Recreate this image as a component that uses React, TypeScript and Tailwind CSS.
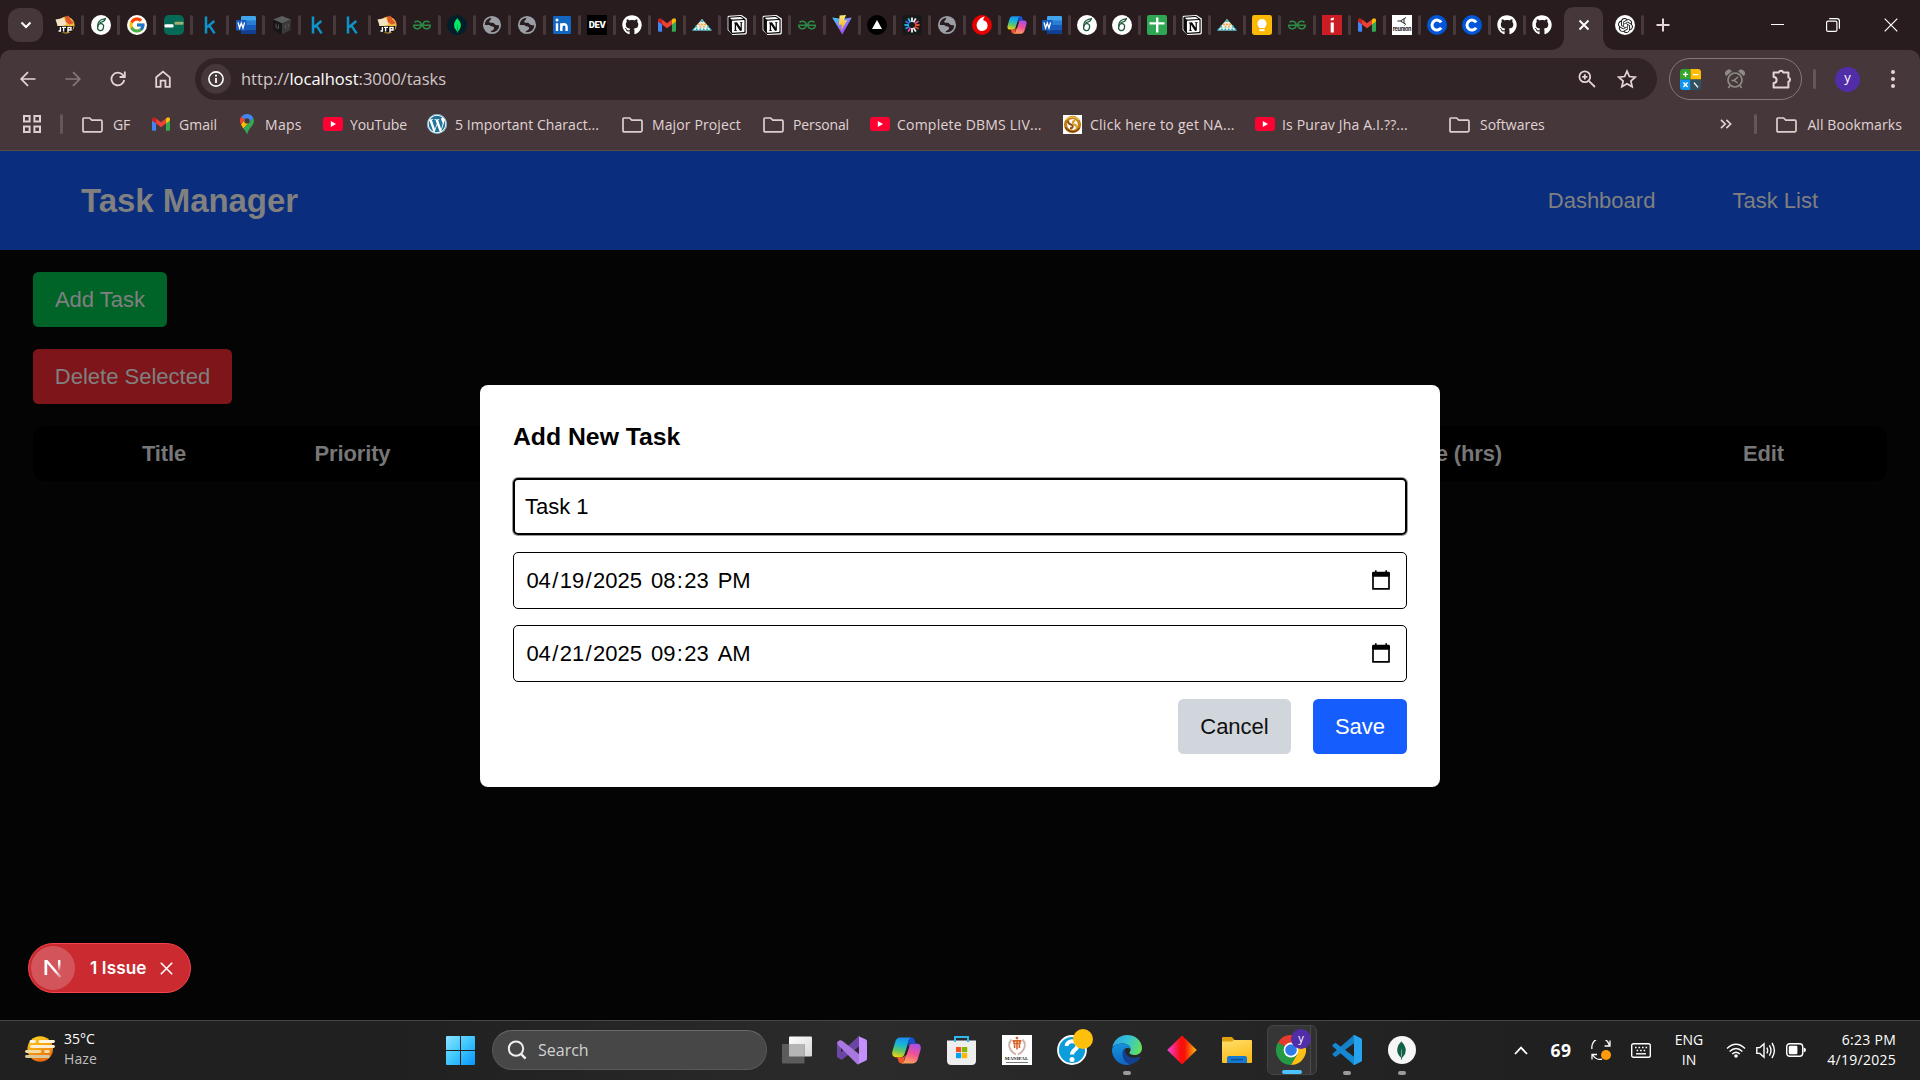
import type { ReactNode } from "react";
import { SiMongodb, SiNotion, SiGeeksforgeeks, SiOpenai } from "react-icons/si";
import { FaGithub, FaWordpress } from "react-icons/fa6";
import { FcGoogle } from "react-icons/fc";

/* ---------- favicons ---------- */

const Jtp = () => (
  <svg viewBox="0 0 20 20" className="size-5">
    <circle cx="11" cy="10" r="8.6" fill="#f0b93c" />
    <path d="M0.5 4.5 L9 3 L11.5 9.5 L3 12 Z" fill="#f3e3c4" />
    <path d="M10 2.5 L13.5 0.4 L15.5 4.5 L19 8 L14.5 9.5 L11 7 Z" fill="#e0562c" />
    <path d="M2 11 H18.5 L17 17.5 H4 Z" fill="#17120e" />
    <path d="M5.4 12 V16 H3.5 M8.6 12 V16.5 M7 12.4 H11 M13 17.4 V12.5 H16 V15 H13" stroke="#fff" strokeWidth="1.4" fill="none" />
  </svg>
);

const Six = () => (
  <svg viewBox="0 0 20 20" className="size-5">
    <circle cx="10" cy="10" r="10" fill="#fff" />
    <ellipse cx="9.6" cy="12.1" rx="2.9" ry="3.5" transform="rotate(14 9.6 12.1)" fill="none" stroke="#1d5c3a" strokeWidth="1.3" />
    <path d="M6.7 12.4 C6.4 8.6 8.2 5.4 11 4.5 L14.4 3.6 C14 5.9 12 7 8.6 7.6" fill="none" stroke="#1d5c3a" strokeWidth="1.3" />
  </svg>
);

const Keys = () => (
  <svg viewBox="0 0 20 20" className="size-5">
    <rect width="20" height="20" rx="5" fill="#046a56" />
    <rect x="0.5" y="9.2" width="9" height="3.4" rx="1" fill="#fff" />
    <rect x="10.5" y="6.8" width="9" height="3" rx="1" fill="#9fae72" />
  </svg>
);

const Kay = () => (
  <svg viewBox="0 0 20 20" className="size-5">
    <path d="M6 1.5 V18.5 M14.3 6 L7 12.3 M9.4 10.6 L14.6 18.4" stroke="#0d93c8" strokeWidth="2.5" fill="none" />
  </svg>
);

const Word = () => (
  <svg viewBox="0 0 20 20" className="size-5">
    <rect x="5" y="1" width="15" height="18" rx="1.2" fill="#41a5ee" />
    <path d="M5 5.5 H20 V10 H5 Z" fill="#2b7cd3" />
    <path d="M5 10 H20 V14.5 H5 Z" fill="#185abd" />
    <path d="M5 14.5 H20 V18 Q20 19 19 19 H6 Q5 19 5 18 Z" fill="#103f91" />
    <rect x="0" y="5" width="10.5" height="10.5" rx="1" fill="#185abd" />
    <path d="M2 7.4 L3.6 13 L5.3 8 L7 13 L8.6 7.4" stroke="#fff" strokeWidth="1.3" fill="none" />
  </svg>
);

const Cube = () => (
  <svg viewBox="0 0 20 20" className="size-5">
    <path d="M10 1 L19 4.5 L10 8.5 L1 4.5 Z" fill="#5d5d5d" />
    <path d="M1 4.5 L10 8.5 V19.5 L1.5 15 Z" fill="#161616" />
    <path d="M19 4.5 L10 8.5 V19.5 L18.5 15 Z" fill="#3a3a3a" />
    <path d="M4 8.5 V12.5 L6.5 13.6 V9.7 M13.5 10 V13.6 M16.3 8.8 V12" stroke="#555" fill="none" />
  </svg>
);

const Gfg = () => <SiGeeksforgeeks className="size-[18px] text-[#2c8a46]" />;

const Mongo = () => (
  <span className="flex size-5 items-center justify-center rounded-full bg-[#031e2b]">
    <SiMongodb className="size-[15px] text-[#00ed64]" />
  </span>
);

const Globe = () => (
  <svg viewBox="0 0 20 20" className="size-5">
    <circle cx="10" cy="10" r="8.2" fill="none" stroke="#9b9fa5" strokeWidth="1.7" />
    <path d="M2 9.2 C4.5 11 6.5 9.2 8 10.6 C9.5 12 12.6 11 12 13.6 C11.5 15.8 9 15 8.2 18.2 C5 17.6 2 14.5 2 9.2 Z" fill="#9b9fa5" />
    <path d="M10.5 2 C8.5 3 9.3 4.8 7.6 5.8 C6.2 7.6 9 8 10.4 7.7 C12 7.4 12.4 9.8 14 9.9 C15.6 10 17 10 18 10.4 C18 5.5 14.6 2.2 10.5 2 Z" fill="#9b9fa5" />
  </svg>
);

const LinkedIn = () => (
  <svg viewBox="0 0 18 18" className="size-[18px]">
    <rect width="18" height="18" rx="1.2" fill="#1166c2" />
    <path d="M4 7.2 V15 M8.3 15 V7.2 M8.3 11 C8.3 7.6 13.6 7 13.6 11 V15" stroke="#fff" strokeWidth="2.4" fill="none" />
    <circle cx="4" cy="4.1" r="1.5" fill="#fff" />
  </svg>
);

const Dev = () => (
  <span className="flex size-5 items-center justify-center bg-black font-['Roboto'] text-[9.5px] font-black tracking-[-0.4px] text-white">DEV</span>
);

const Github = () => <FaGithub className="size-5 text-white" />;

const Gmail = () => (
  <svg viewBox="0 0 24 18" className="h-[14px] w-[18px]">
    <path d="M0 3.2 V16.5 Q0 18 1.6 18 H5.4 V7.5 Z" fill="#4285f4" />
    <path d="M24 3.2 V16.5 Q24 18 22.4 18 H18.6 V7.5 Z" fill="#34a853" />
    <path d="M18.6 1.8 V8.2 L24 4.2 V2.6 C24 0 21.2 -0.8 19.4 0.9 Z" fill="#fbbc04" />
    <path d="M0 4.2 L5.4 8.2 V1.8 L4.6 0.9 C2.8 -0.8 0 0 0 2.6 Z" fill="#c5221f" />
    <path d="M5.4 1.8 L12 6.8 L18.6 1.8 V8.2 L12 13.2 L5.4 8.2 Z" fill="#ea4335" />
  </svg>
);

const Pyramid = () => (
  <svg viewBox="0 0 20 20" className="size-5">
    <path d="M10 4 L16 11 H4 Z" fill="#f4ead8" />
    <path d="M4.6 10.5 H15.4 L19.5 15.5 H0.5 Z" fill="#e4f3f2" />
    <path d="M10 4.5 L12 7 H8 Z M4 10 L5.6 12.4 H2.6 Z M1.4 13 L3 15.6 H0 Z M4.8 13 L6.4 15.6 H3.2 Z M8.3 13 L9.9 15.6 H6.7 Z M11.7 13 L13.3 15.6 H10.1 Z M15.2 13 L16.8 15.6 H13.6 Z M18.4 13 L20 15.6 H17 Z M16 10 L17.6 12.4 H14.6 Z" fill="#27b0bd" />
    <path d="M7 8 L8.4 10.3 H5.8 Z M10 8 L11.4 10.3 H8.6 Z M13 8 L14.4 10.3 H11.6 Z M8.5 10.6 L9.9 12.6 H7.1 Z M12 10.6 L13.4 12.6 H10.6 Z" fill="#f2a13a" />
  </svg>
);

const Notion = () => (
  <span className="relative flex size-5 items-center justify-center">
    <svg viewBox="0 0 20 20" className="absolute size-5">
      <path d="M0.6 2 Q0.6 0.8 2 0.7 L14.5 0 L19.8 3.6 V18 Q19.6 19.3 18.4 19.4 L5.5 20 L0.6 15 Z" fill="#fff" />
    </svg>
    <SiNotion className="relative size-[18px] text-[#0b0909]" />
  </span>
);

const Vite = () => (
  <svg viewBox="0 0 20 20" className="size-5">
    <defs>
      <linearGradient id="viteA" x1="0" y1="0" x2="0.7" y2="1">
        <stop offset="0" stopColor="#41d1ff" />
        <stop offset="1" stopColor="#bd34fe" />
      </linearGradient>
      <linearGradient id="viteB" x1="0" y1="0" x2="0" y2="1">
        <stop offset="0" stopColor="#ffea83" />
        <stop offset="1" stopColor="#ffa800" />
      </linearGradient>
    </defs>
    <path d="M0.2 2.4 L10 4 L19.8 2.4 L10.3 19.6 Z" fill="url(#viteA)" />
    <path d="M7.6 0.6 L14 0 L11.8 5.5 L15.2 5 L9.2 15.5 L9.8 9.4 L6.8 10 Z" fill="url(#viteB)" />
  </svg>
);

const Vercel = () => (
  <svg viewBox="0 0 20 20" className="size-5">
    <circle cx="10" cy="10" r="10" fill="#000" />
    <path d="M10 5 L15 14 H5 Z" fill="#fff" />
  </svg>
);

const BURST: [number, string][] = [
  [0, "#f4f4f4"], [30, "#f4f4f4"], [60, "#f04c8c"], [90, "#f0542f"], [120, "#e8432e"], [150, "#f4f4f4"],
  [180, "#f4f4f4"], [210, "#ee4fa0"], [240, "#2b8ff5"], [270, "#21c0e8"], [300, "#3a6af0"], [330, "#35c1f1"],
];
const Burst = () => (
  <svg viewBox="0 0 20 20" className="size-5">
    <rect width="20" height="20" rx="4" fill="#171a1b" />
    {BURST.map(([a, c]) => (
      <path key={a} d="M10 2.4 V7" stroke={c} strokeWidth="1.8" transform={`rotate(${a} 10 10)`} />
    ))}
  </svg>
);

const Vodafone = () => (
  <svg viewBox="0 0 20 20" className="size-5">
    <circle cx="10" cy="10" r="10" fill="#e60000" />
    <path d="M13 1.6 C9 2 4.6 6 4.6 10.6 A5.5 5.5 0 0 0 15.6 10.4 C15.6 7.6 13.8 5.8 11.3 5.2 C11.2 3.8 12 2.4 13 1.6 Z" fill="#fff" />
  </svg>
);

const Copilot = ({ size }: { size: "sm" | "lg" }) => (
  <svg viewBox="0 0 28 26" className={size === "sm" ? "h-[18px] w-5" : "h-[27px] w-[29px]"}>
    <defs>
      <linearGradient id="cpA" x1="0.5" y1="0" x2="0.3" y2="1">
        <stop offset="0" stopColor="#1a8ff0" />
        <stop offset="0.35" stopColor="#18b5d8" />
        <stop offset="0.65" stopColor="#5cc46a" />
        <stop offset="1" stopColor="#f2d40b" />
      </linearGradient>
      <linearGradient id="cpB" x1="0.7" y1="0" x2="0.4" y2="1">
        <stop offset="0" stopColor="#a550ef" />
        <stop offset="0.5" stopColor="#ef5096" />
        <stop offset="1" stopColor="#ffa15c" />
      </linearGradient>
    </defs>
    <path d="M17 0.5 H19 C21 0.5 21.6 2 22.2 4 L23 6.5 H19 C17 6.5 16 7 15.2 9 Z" fill="#1450d8" />
    <path d="M11 25.5 H9 C7 25.5 6.4 24 5.8 22 L5 19.5 H9 C11 19.5 12 19 12.8 17 Z" fill="#f2542d" />
    <path d="M8 0.5 H18.5 C17 1 16.4 2.2 15.8 4.2 L12.4 15.6 C11.6 18.3 10.6 19.5 8 19.5 H3.4 C0.4 19.5 -0.3 16.5 0.5 13.6 L3 5 C3.9 2 5.4 0.5 8 0.5 Z" fill="url(#cpA)" />
    <path d="M20 25.5 H9.5 C11 25 11.6 23.8 12.2 21.8 L15.6 10.4 C16.4 7.7 17.4 6.5 20 6.5 H24.6 C27.6 6.5 28.3 9.5 27.5 12.4 L25 21 C24.1 24 22.6 25.5 20 25.5 Z" fill="url(#cpB)" />
    <path d="M15.6 8.6 H17 L14 17.6 H12 Z" fill="#2b1f22" />
  </svg>
);

const GreenPlus = () => (
  <svg viewBox="0 0 20 20" className="size-5">
    <rect width="20" height="20" rx="2" fill="#2fa653" />
    <path d="M10.2 2.5 V17.5 M2.5 8.4 H17.5" stroke="#fff" strokeWidth="2.4" />
  </svg>
);

const Keep = () => (
  <svg viewBox="0 0 20 20" className="size-5">
    <rect width="20" height="20" rx="2.4" fill="#fbb905" />
    <path d="M10 4 A4.6 4.6 0 0 0 7 12 V13 H13 V12 A4.6 4.6 0 0 0 10 4 Z" fill="#fff" />
    <rect x="7.4" y="14.2" width="5.2" height="1.9" fill="#fff" />
  </svg>
);

const RedI = () => (
  <svg viewBox="0 0 20 20" className="size-5">
    <rect width="20" height="20" fill="#cc1c24" />
    <path d="M8.7 3.6 L11.8 2.6 V5 L8.7 5.6 Z M8.7 7.4 H11.8 V17.4 H8.7 Z" fill="#fff" />
  </svg>
);

const Reunion = () => (
  <span className="flex size-5 flex-col items-center justify-between bg-white pt-[2px] pb-[3px]">
    <svg viewBox="0 0 10 8" className="h-2 w-[10px]">
      <path d="M9 0.5 L3.5 4 L9 7.5 M0.5 4 H3.5 M7 2 V6" stroke="#222" fill="none" />
    </svg>
    <span className="font-['Inter'] text-[5.5px] leading-[6px] font-bold tracking-[-0.3px] text-[#222]">reunion</span>
  </span>
);

const Cee = () => (
  <svg viewBox="0 0 20 20" className="size-5">
    <circle cx="10" cy="10" r="10" fill="#0156d8" />
    <path d="M14.2 7.4 A5 5 0 1 0 14.2 12.8" stroke="#fff" strokeWidth="3" fill="none" />
  </svg>
);

const ChatGpt = () => (
  <span className="flex size-5 items-center justify-center rounded-full bg-white">
    <SiOpenai className="size-[15px] text-[#1a1a1a]" />
  </span>
);

type TabDef = [() => ReactNode, string];
const W36 = "w-[36px]";
const W35 = "w-[35px]";
const CopilotTab = () => <Copilot size="sm" />;
const GoogleTab = () => (
  <span className="flex size-5 items-center justify-center rounded-full bg-white">
    <FcGoogle className="size-[18px]" />
  </span>
);
const TABS: TabDef[] = [
  [Jtp, W35], [Six, W36], [GoogleTab, W36], [Keys, "w-[37px]"], [Kay, W36], [Word, W36], [Cube, W36],
  [Kay, W35], [Kay, W35], [Jtp, W35], [Gfg, W35], [Mongo, W35], [Globe, W35], [Globe, W35], [LinkedIn, W35],
  [Dev, W35], [Github, W35], [Gmail, W35], [Pyramid, W35], [Notion, W35], [Notion, W35], [Gfg, W35],
  [Vite, W35], [Vercel, W35], [Burst, W35], [Globe, W35], [Vodafone, W35], [CopilotTab, W35], [Word, W35],
  [Six, W35], [Six, W35], [GreenPlus, W35], [Notion, W35], [Pyramid, W35], [Keep, W35], [Gfg, W35],
  [RedI, W35], [Gmail, W35], [Reunion, W35], [Cee, W35], [Cee, W35], [Github, W35], [Github, W35],
];

function Tab({ icon, width, sep }: { icon: ReactNode; width: string; sep: boolean }) {
  return (
    <div className={`flex shrink-0 items-center justify-end gap-1.5 ${width}`}>
      <div className="flex size-5 items-center justify-center">{icon}</div>
      <div className={sep ? "h-5 w-[3px] rounded-full bg-[#483a3c]" : "h-5 w-[3px]"} />
    </div>
  );
}

function TabStrip() {
  return (
    <div className="flex h-[50px] items-center bg-[#281c1e]">
      <div className="ml-2 flex h-[34px] w-[35px] shrink-0 items-center justify-center rounded-xl bg-[#46383a]">
        <svg viewBox="0 0 12 8" className="h-2 w-3">
          <path d="M1.5 1.5 L6 6 L10.5 1.5" stroke="#fff" strokeWidth="2" fill="none" />
        </svg>
      </div>
      <div className="ml-1.5 flex">
        {TABS.map(([Icon, width], i) => (
          <Tab key={i} icon={<Icon />} width={width} sep={i < TABS.length - 1} />
        ))}
      </div>
      <div className="relative ml-[3px] flex h-[50px] w-[39px] shrink-0 items-center justify-center">
        <svg viewBox="0 0 67 43" className="absolute bottom-0 -left-[14px] h-[43px] w-[67px]">
          <path d="M0 43 C9 43 14 38 14 29 V11 Q14 0 25 0 H42 Q53 0 53 11 V29 C53 38 58 43 67 43 Z" fill="#46383a" />
        </svg>
        <svg viewBox="0 0 12 12" className="relative size-3">
          <path d="M1.5 1.5 L10.5 10.5 M10.5 1.5 L1.5 10.5" stroke="#fff" strokeWidth="1.9" />
        </svg>
      </div>
      <div className="ml-[6px] flex">
        <Tab icon={<ChatGpt />} width={W35} sep />
      </div>
      <svg viewBox="0 0 14 14" className="ml-3 size-[14px]">
        <path d="M7 0.5 V13.5 M0.5 7 H13.5" stroke="#e6d6d8" strokeWidth="2" />
      </svg>
      <div className="ml-auto flex items-center pr-[22px] text-white">
        <svg viewBox="0 0 13 13" className="size-[13px]">
          <path d="M0 5.5 H13" stroke="currentColor" />
        </svg>
        <svg viewBox="0 0 14 14" className="ml-[42px] size-[14px]">
          <rect x="0.6" y="3.1" width="10.3" height="10.3" rx="1.5" fill="none" stroke="currentColor" strokeWidth="1.2" />
          <path d="M3.2 0.6 H11 Q13.4 0.6 13.4 3 V10.8" stroke="currentColor" strokeWidth="1.2" fill="none" />
        </svg>
        <svg viewBox="0 0 14 14" className="ml-11 size-[14px]">
          <path d="M0.7 0.7 L13.3 13.3 M13.3 0.7 L0.7 13.3" stroke="currentColor" strokeWidth="1.2" />
        </svg>
      </div>
    </div>
  );
}

/* ---------- toolbar ---------- */

function Toolbar() {
  return (
    <div className="flex h-[58px] items-center pl-[5px] text-[#e6d3d5]">
      <div className="flex w-[45px] justify-center">
        <svg viewBox="0 0 16 16" className="size-4">
          <path d="M15.5 8 H1.5 M8 1.2 L1.2 8 L8 14.8" stroke="currentColor" strokeWidth="1.7" fill="none" />
        </svg>
      </div>
      <div className="flex w-[45px] justify-center text-[#877779]">
        <svg viewBox="0 0 16 16" className="size-4">
          <path d="M0.5 8 H14.5 M8 1.2 L14.8 8 L8 14.8" stroke="currentColor" strokeWidth="1.7" fill="none" />
        </svg>
      </div>
      <div className="flex w-[45px] justify-center">
        <svg viewBox="0 0 16 16" className="size-4">
          <path d="M14.2 9 A6.4 6.4 0 1 1 12.8 3.9 L14.6 5.6" stroke="currentColor" strokeWidth="1.8" fill="none" />
          <path d="M14.8 0.6 V6 H9.6" stroke="currentColor" strokeWidth="1.8" fill="none" />
        </svg>
      </div>
      <div className="flex w-[45px] justify-center">
        <svg viewBox="0 0 16 18" className="h-[18px] w-4">
          <path d="M1.2 7.3 L8 1.6 L14.8 7.3 V16.8 H10.4 V10.6 H5.6 V16.8 H1.2 Z" stroke="currentColor" strokeWidth="1.8" fill="none" />
        </svg>
      </div>
      <div className="ml-[10px] flex h-[42px] w-[1462px] items-center rounded-full bg-[#302426] pr-[19px] pl-1.5">
        <div className="flex size-[30px] items-center justify-center rounded-full bg-[#46383a]">
          <svg viewBox="0 0 16 16" className="size-4">
            <circle cx="8" cy="8" r="7.1" stroke="#fff" strokeWidth="1.6" fill="none" />
            <path d="M8 7 V12" stroke="#fff" strokeWidth="1.8" />
            <circle cx="8" cy="4.7" r="1.1" fill="#fff" />
          </svg>
        </div>
        <span className="ml-[10px] text-[16.5px] whitespace-nowrap text-[#d2c7c8]">
          http://<span className="text-white">localhost</span>:3000/tasks
        </span>
        <svg viewBox="0 0 18 18" className="ml-auto size-[18px]">
          <circle cx="6.8" cy="6.8" r="5.4" stroke="currentColor" strokeWidth="1.8" fill="none" />
          <path d="M10.8 10.8 L17 17 M6.8 4.2 V9.4 M4.2 6.8 H9.4" stroke="currentColor" strokeWidth="1.8" />
        </svg>
        <svg viewBox="0 0 24 24" className="ml-[20px] size-[22px]">
          <path d="M12 3.4 L14.6 9.3 L21 9.9 L16.2 14.2 L17.6 20.5 L12 17.2 L6.4 20.5 L7.8 14.2 L3 9.9 L9.4 9.3 Z" stroke="currentColor" strokeWidth="1.9" fill="none" />
        </svg>
      </div>
      <div className="ml-3 flex h-[42px] w-[133px] items-center rounded-full border border-[#85787a] pl-[10px]">
        <svg viewBox="0 0 21 21" className="size-[21px]">
          <path d="M3 0 H10.5 V10.5 H0 V3 Q0 0 3 0 Z" fill="#34a52c" />
          <path d="M10.5 0 H18 Q21 0 21 3 V10.5 H10.5 Z" fill="#fdbc08" />
          <path d="M0 10.5 H10.5 V21 H3 Q0 21 0 18 Z" fill="#1294f2" />
          <path d="M10.5 10.5 H21 V18 Q21 21 18 21 H10.5 Z" fill="#32505f" />
          <path d="M5.5 2.8 V8 M2.9 5.4 H8.1 M13 5.6 H18.4 M3.4 13.6 L7.6 18 M7.6 13.6 L3.4 18 M14 13.6 L18 18.4" stroke="#fff" strokeWidth="1.4" />
        </svg>
        <svg viewBox="0 0 20 20" className="ml-6 size-5 text-[#8e8b87]">
          <circle cx="10" cy="11" r="7" stroke="currentColor" strokeWidth="1.7" fill="none" />
          <path d="M1.2 6.6 A3.2 3.2 0 0 1 6.4 2.2 Z M18.8 6.6 A3.2 3.2 0 0 0 13.6 2.2 Z" fill="currentColor" stroke="currentColor" strokeWidth="1" />
          <path d="M13 8 L9 11.4 H6.4 M9 11.4 L12.6 14 M5 16.5 L3.4 19 M15 16.5 L16.6 19" stroke="currentColor" strokeWidth="1.5" fill="none" />
        </svg>
        <svg viewBox="0 0 22 22" className="ml-[26px] size-[22px]">
          <path d="M2.6 4.4 H7.8 A2.3 2.3 0 0 1 12.2 4.4 H17.4 V9.4 A2.3 2.3 0 0 1 17.4 13.8 V19.6 H2.6 V15 A2.8 2.8 0 0 0 2.6 9 Z" stroke="currentColor" strokeWidth="2" strokeLinejoin="round" fill="none" />
          <path d="M8 4 A2.2 2.2 0 0 1 12 4 Z M18 9.4 A2.2 2.2 0 0 1 18 13.6 Z" fill="currentColor" />
        </svg>
      </div>
      <div className="ml-[11px] h-5 w-[3px] rounded-full bg-[#63575a]" />
      <div className="ml-[19px] flex size-[25px] items-center justify-center rounded-full bg-[#512da8] pb-[3px] text-[13px] text-white">y</div>
      <div className="ml-[31px] flex flex-col gap-[3px]">
        <i className="size-1 rounded-full bg-[#e6d3d5]" />
        <i className="size-1 rounded-full bg-[#e6d3d5]" />
        <i className="size-1 rounded-full bg-[#e6d3d5]" />
      </div>
    </div>
  );
}

/* ---------- bookmarks bar ---------- */

const Folder = () => (
  <svg viewBox="0 0 21 16" className="mt-px h-4 w-[21px]">
    <path d="M1 13.6 V2 Q1 1 2 1 H7.6 L9.8 3.2 H18.8 Q20 3.2 20 4.4 V13.6 Q20 14.9 18.8 14.9 H2.2 Q1 14.9 1 13.6 Z" stroke="#dccfd0" strokeWidth="1.7" fill="none" />
  </svg>
);

const YouTube = () => (
  <svg viewBox="0 0 20 14" className="h-[14px] w-5">
    <rect width="20" height="14" rx="3" fill="#ff0033" />
    <path d="M7.8 4 L13 7 L7.8 10 Z" fill="#fff" />
  </svg>
);

const MapsPin = () => (
  <svg viewBox="0 0 16 20" className="h-5 w-4">
    <path d="M8 0 C10.8 0 13.2 1.6 14.3 4 L8 11 L2.4 2.6 C3.8 1 5.8 0 8 0 Z" fill="#4285f4" />
    <path d="M2.4 2.6 L6 5.6 L2 10.4 C0.4 7.8 0.4 4.8 2.4 2.6 Z" fill="#ea4335" />
    <path d="M10 8.4 L4.4 14.6 C3.4 12.8 2.6 11.6 2 10.4 L6 5.6 Z" fill="#fbbc04" />
    <path d="M14.3 4 C15.4 6.4 15 8.8 13.6 11 C11.6 13.8 9.4 15.6 8.4 19.4 Q8 20.4 7.6 19.4 C7 17.4 5.6 16.6 4.4 14.6 Z" fill="#34a853" />
    <circle cx="8" cy="6.9" r="2.7" fill="#46383a" />
  </svg>
);

const WordPress = () => (
  <span className="flex size-5 items-center justify-center rounded-full bg-white">
    <FaWordpress className="size-5 text-[#21759b]" />
  </span>
);

const Knot = () => (
  <svg viewBox="0 0 20 20" className="size-[19px]">
    <rect width="20" height="20" fill="#fff" />
    <circle cx="10" cy="10" r="7.4" stroke="#c17f17" strokeWidth="3.4" fill="none" />
    <path d="M3 5 C6 1.5 13 1.2 16.5 5" stroke="#f6c244" strokeWidth="1.4" fill="none" />
    <path d="M2.6 13 C5 18.6 14 19.4 17.4 13.4" stroke="#7a3b08" strokeWidth="1.4" fill="none" />
    <path d="M5.4 6 C4.8 10.5 9 9.4 10 11 C10.8 12.6 9.6 14 7.4 14" stroke="#8f5410" strokeWidth="2.2" fill="none" />
    <path d="M14.6 14 C15.2 9.6 11 10.4 10.4 8.8 C10 7.2 11 6 13 6" stroke="#dd9d26" strokeWidth="2.2" fill="none" />
  </svg>
);

type Mark = { icon: ReactNode; label: string; box: string; gap: string; track: string };
const MARKS: Mark[] = [
  { icon: <Folder />, label: "GF", box: "w-[70px]", gap: "gap-[10px]", track: "tracking-[-0.2px]" },
  { icon: <Gmail />, label: "Gmail", box: "w-[87px]", gap: "gap-[9px]", track: "tracking-[0px]" },
  { icon: <MapsPin />, label: "Maps", box: "w-[84px]", gap: "gap-[10px]", track: "tracking-[0.3px]" },
  { icon: <YouTube />, label: "YouTube", box: "w-[104px]", gap: "gap-[7px]", track: "tracking-[-0.08px]" },
  { icon: <WordPress />, label: "5 Important Charact...", box: "w-[195px]", gap: "gap-2", track: "tracking-[0.06px]" },
  { icon: <Folder />, label: "Major Project", box: "w-[141px]", gap: "gap-[9px]", track: "tracking-[0.12px]" },
  { icon: <Folder />, label: "Personal", box: "w-[107px]", gap: "gap-[9px]", track: "tracking-[-0.12px]" },
  { icon: <YouTube />, label: "Complete DBMS LIV...", box: "w-[193px]", gap: "gap-[7px]", track: "tracking-[0.22px]" },
  { icon: <Knot />, label: "Click here to get NA...", box: "w-[192px]", gap: "gap-2", track: "tracking-[0.26px]" },
  { icon: <YouTube />, label: "Is Purav Jha A.I.??...", box: "w-[194px]", gap: "gap-[7px]", track: "tracking-[0.16px]" },
  { icon: <Folder />, label: "Softwares", box: "w-[110px]", gap: "gap-[10px]", track: "tracking-[0px]" },
];

function BookmarksBar() {
  return (
    <div className="flex h-8 items-center text-[14px] text-[#e0d3d5]">
      <svg viewBox="0 0 18 18" className="ml-[23px] size-[18px]">
        <path d="M1 1 H6.6 V6.6 H1 Z M11.4 1 H17 V6.6 H11.4 Z M1 11.4 H6.6 V17 H1 Z M11.4 11.4 H17 V17 H11.4 Z" stroke="#dccfd0" strokeWidth="2" fill="none" />
      </svg>
      <div className="ml-[19px] h-5 w-[3px] rounded-full bg-[#63575a]" />
      <div className="ml-[19px] flex">
        {MARKS.map((m) => (
          <div key={m.label} className={`flex shrink-0 items-center whitespace-nowrap ${m.box} ${m.gap}`}>
            {m.icon}
            <span className={m.track}>{m.label}</span>
          </div>
        ))}
      </div>
      <svg viewBox="0 0 12 10" className="ml-auto h-[10px] w-3">
        <path d="M1 0.8 L5.2 5 L1 9.2 M6.4 0.8 L10.6 5 L6.4 9.2" stroke="currentColor" strokeWidth="1.7" fill="none" />
      </svg>
      <div className="ml-[22px] h-5 w-[3px] rounded-full bg-[#63575a]" />
      <div className="mr-[18px] ml-[19px] flex items-center gap-[10px] whitespace-nowrap">
        <Folder />
        <span className="tracking-[0.1px]">All Bookmarks</span>
      </div>
    </div>
  );
}

/* ---------- page ---------- */

const CalendarIcon = () => (
  <svg viewBox="0 0 18 20" className="h-5 w-[18px]">
    <path d="M1 6 H17 V18.9 H1 Z" stroke="#000" strokeWidth="1.7" strokeLinejoin="round" fill="none" />
    <path d="M1.5 1.8 H16.5 Q18 1.8 18 3.2 V6 H0 V3.2 Q0 1.8 1.5 1.8 Z M3 0.3 H4.6 V3 H3 Z M13.4 0.3 H15 V3 H13.4 Z" fill="#000" />
  </svg>
);

function DateField({ parts, suffix }: { parts: string[]; suffix: string }) {
  const [mo, d, y, h, mi] = parts;
  return (
    <div className="flex h-[57px] items-center rounded-[5px] border border-black pr-[16px] pb-px pl-[11px] text-[22px]">
      <div className="whitespace-pre">
        <span className="px-[1.375px]">{mo}</span>/<span className="px-[1.375px]">{d}</span>/
        <span className="px-[1.375px]">{y}</span>{" "}
        <span className="px-[1.375px]">{h}</span>:<span className="px-[1.375px]">{mi}</span>{" "}
        <span className="px-[1.375px]">{suffix}</span>
      </div>
      <div className="ml-auto">
        <CalendarIcon />
      </div>
    </div>
  );
}

function AddTaskDialog() {
  return (
    <div className="absolute top-[234px] left-[480px] h-[402px] w-[960px] rounded-lg bg-white px-[33px] pt-[33px] text-black">
      <h2 className="text-[24.75px] leading-[37px] font-bold">Add New Task</h2>
      <div className="mt-[23px] flex h-[57px] items-center rounded-[5px] border-2 border-black text-[22px] shadow-[0_0_0_1px_#9a9a9a]">
        <span className="pl-[10px]">Task 1</span>
      </div>
      <div className="mt-[17px]">
        <DateField parts={["04", "19", "2025", "08", "23"]} suffix="PM" />
      </div>
      <div className="mt-4">
        <DateField parts={["04", "21", "2025", "09", "23"]} suffix="AM" />
      </div>
      <div className="mt-[17px] flex justify-end gap-[22px] text-[22px]">
        <button className="h-[55px] w-[113px] rounded-[5.5px] bg-[#d1d5dc] text-[#101010]">Cancel</button>
        <button className="h-[55px] w-[94px] rounded-[5.5px] bg-[#155dfc] text-white">Save</button>
      </div>
    </div>
  );
}

function IssueBadge() {
  return (
    <div className="absolute top-[792px] left-[28px] flex h-[50px] w-[163px] items-center rounded-full border border-[#f4434b] bg-[#ca2a30] pl-[2px]">
      <div className="flex size-11 items-center justify-center rounded-full bg-[#d3545a]">
        <svg viewBox="0 0 18 20" className="h-5 w-[18px]">
          <defs>
            <linearGradient id="nxA" x1="0" y1="0" x2="0" y2="1">
              <stop offset="0.3" stopColor="#fff" />
              <stop offset="1" stopColor="#fff" stopOpacity="0" />
            </linearGradient>
            <linearGradient id="nxB" gradientUnits="userSpaceOnUse" x1="9" y1="9" x2="18" y2="20">
              <stop offset="0.3" stopColor="#fff" />
              <stop offset="1" stopColor="#fff" stopOpacity="0.1" />
            </linearGradient>
          </defs>
          <path d="M0.5 2 H3.4 L17.6 18.6 L15.6 20 L3.2 5.4 V17 H0.5 Z" fill="url(#nxB)" />
          <path d="M14 2 H16.4 V13.4 H14 Z" fill="url(#nxA)" />
        </svg>
      </div>
      <span className="ml-[15px] font-['Inter'] text-[17.2px] font-semibold tracking-[0.1px] whitespace-nowrap text-white">1 Issue</span>
      <svg viewBox="0 0 13 13" className="ml-[13px] size-[13px]">
        <path d="M0.8 0.8 L12.2 12.2 M12.2 0.8 L0.8 12.2" stroke="#fff" strokeWidth="1.6" />
      </svg>
    </div>
  );
}

function TaskPage() {
  return (
    <main className="relative h-[869px] overflow-hidden bg-[#040404] font-['Liberation_Sans',Arial,sans-serif] text-[22px]">
      <nav className="flex h-[99px] items-center bg-[#0a2d7d] pr-[102px] pl-[81px] text-[#808080]">
        <span className="text-[33px] font-bold tracking-[-0.05px]">Task Manager</span>
        <span className="ml-auto">Dashboard</span>
        <span className="ml-[77px]">Task List</span>
      </nav>
      <div className="flex flex-col items-start px-[33px] pt-[22px] text-[#808080]">
        <button className="h-[55px] w-[134px] rounded-[5.5px] bg-[#006428]">Add Task</button>
        <button className="mt-[22px] h-[55px] w-[199px] rounded-[5.5px] bg-[#7d151a]">Delete Selected</button>
        <div className="mt-[22px] grid h-[55px] w-full grid-cols-[262px_115px_1fr_247px] items-center rounded-[11px] bg-black text-center font-bold tracking-[-0.15px] text-[#777777]">
          <span>Title</span>
          <span>Priority</span>
          <span className="pr-[138px] text-right">Time (hrs)</span>
          <span>Edit</span>
        </div>
      </div>
      <AddTaskDialog />
      <IssueBadge />
    </main>
  );
}

/* ---------- taskbar ---------- */

const Haze = () => (
  <svg viewBox="0 0 30 26" className="h-[26px] w-[30px]">
    <defs>
      <linearGradient id="sun" x1="0.3" y1="0" x2="0.7" y2="1">
        <stop offset="0" stopColor="#ffd21f" />
        <stop offset="1" stopColor="#e8620c" />
      </linearGradient>
    </defs>
    <circle cx="15.2" cy="13" r="12.8" fill="url(#sun)" />
    <g strokeWidth="2.8" strokeLinecap="round">
      <path d="M6 5.5 H9.5 M15 5.5 H28.5" stroke="#fdf5dd" />
      <path d="M6.5 10.5 H28.5" stroke="#fdf0cf" />
      <path d="M1.5 15.5 H15 M20.5 15.5 H23.5" stroke="#f3dca4" />
      <path d="M1.5 20.5 H23.5" stroke="#d9c79a" />
    </g>
  </svg>
);

const Start = () => (
  <svg viewBox="0 0 29 29" className="size-[29px]">
    <defs>
      <linearGradient id="win" x1="0" y1="0" x2="1" y2="1">
        <stop offset="0" stopColor="#8be3ff" />
        <stop offset="0.5" stopColor="#3ec6ff" />
        <stop offset="1" stopColor="#0795fb" />
      </linearGradient>
    </defs>
    <path d="M1 0 H14 V14 H0 V1 Q0 0 1 0 Z M15 0 H28 Q29 0 29 1 V14 H15 Z M0 15 H14 V29 H1 Q0 29 0 28 Z M15 15 H29 V28 Q29 29 28 29 H15 Z" fill="url(#win)" />
  </svg>
);

const TaskView = () => (
  <svg viewBox="0 0 30 28" className="h-7 w-[30px]">
    <defs>
      <linearGradient id="tv" x1="0" y1="0" x2="1" y2="1">
        <stop offset="0" stopColor="#fff" />
        <stop offset="1" stopColor="#d5d5d5" />
      </linearGradient>
    </defs>
    <rect x="7" y="0.5" width="23" height="20" rx="1" fill="url(#tv)" />
    <rect x="0" y="8" width="22.5" height="19.6" rx="1" fill="#5c5c5c" />
    <rect x="7" y="8" width="15.5" height="12.5" fill="#b5b5b5" />
  </svg>
);

const VisualStudio = () => (
  <svg viewBox="0 0 30 30" className="size-[30px]">
    <path d="M0 7.5 L4 5.5 V24.5 L0 22 Z" fill="#7047a8" />
    <path d="M4.5 25 L22 11.5 V1 L1 20 Z" fill="#6b45a3" />
    <path d="M0 7.5 Q2.5 4 5.5 6 L22 19 V29.5 L20 29 L1 10 Z" fill="#a878e0" />
    <path d="M20 0.6 L29 4.6 Q30 5.2 30 6 V24 Q30 24.8 29 25.4 L20.5 29.6 Q22 29 22 27.5 V2.5 Q22 1 20 0.6 Z" fill="#c590fb" />
  </svg>
);

const Store = () => (
  <svg viewBox="0 0 29 29" className="size-[29px]">
    <path d="M0 4.5 H29 V24.5 Q29 29 24.5 29 H4.5 Q0 29 0 24.5 Z" fill="#eeeeee" />
    <path d="M8 6 V1 H21 V6" stroke="#2fb7ef" strokeWidth="2" fill="none" />
    <rect x="9" y="11" width="5.2" height="5.2" fill="#f25022" />
    <rect x="15" y="11" width="5.2" height="5.2" fill="#7fba00" />
    <rect x="9" y="17" width="5.2" height="5.2" fill="#00a4ef" />
    <rect x="15" y="17" width="5.2" height="5.2" fill="#ffb900" />
  </svg>
);

const Manipal = () => (
  <span className="flex size-[30px] flex-col items-center bg-white">
    <svg viewBox="0 0 20 20" className="h-[21px] w-5">
      <path d="M4.5 4 C0.5 8 1.5 15 9 19 M15.5 4 C19.5 8 18.5 15 11 19" stroke="#cdb0a8" strokeWidth="1.8" fill="none" />
      <path d="M5.5 5.4 H14.5 M7 5.4 V8 H13 V5.4 M10 5.4 V14 M7.6 12.6 V9 M12.4 12.6 V9" stroke="#d9622b" strokeWidth="1.6" fill="none" />
      <circle cx="10" cy="2.6" r="1.4" fill="#d9622b" />
    </svg>
    <span className="font-['Liberation_Serif',serif] text-[5px] leading-[6px] font-bold text-[#222]">MANIPAL</span>
    <span className="h-px w-[22px] bg-[#777]" />
  </span>
);

const Help = () => (
  <span className="relative flex size-[30px] items-center justify-center">
    <svg viewBox="0 0 30 30" className="size-[30px]">
      <circle cx="15" cy="15" r="14" fill="#0c9ddb" stroke="#fff" strokeWidth="1.8" />
      <path d="M9.6 11 C9.6 4.8 20.4 4.8 20.4 11 C20.4 14.6 15 14.8 15 19.6" stroke="#fff" strokeWidth="4" fill="none" />
      <circle cx="15" cy="24.4" r="2.5" fill="#fff" />
    </svg>
    <span className="absolute -top-1.5 left-4 size-5 rounded-full bg-[#ffbf0d]" />
  </span>
);

const Edge = () => (
  <svg viewBox="0 0 30 30" className="size-[30px]">
    <defs>
      <linearGradient id="edA" x1="0" y1="0.3" x2="1" y2="0.6">
        <stop offset="0" stopColor="#2aa6e8" />
        <stop offset="0.5" stopColor="#36c4d0" />
        <stop offset="1" stopColor="#66e05a" />
      </linearGradient>
      <linearGradient id="edB" x1="0.2" y1="0" x2="0.4" y2="1">
        <stop offset="0" stopColor="#1494dd" />
        <stop offset="1" stopColor="#0f66c2" />
      </linearGradient>
    </defs>
    <path d="M0.3 12.5 C1.6 5 7.6 0 15 0 C24 0 30 6.4 30 13 C30 17.4 26.6 20 22.6 20 C19.4 20 17.4 18.8 17.4 17.8 C17.4 17 18.6 16.6 18.6 14.4 C18.6 11 15 8.6 10.6 8.6 C6 8.6 2 10.2 0.3 12.5 Z" fill="url(#edA)" />
    <path d="M0 15 C0 11 5 8.6 10.6 8.6 C15 8.6 18.6 11 18.4 14 C16 11.6 10.8 13.4 10.8 18.6 C10.8 24 15 28 20 28.6 C18.4 29.6 17 30 15 30 C6.4 30 0 23.2 0 15 Z" fill="url(#edB)" />
    <path d="M13 13.4 C9 17 9.4 26.4 18 29.4 C22.6 28.8 26.4 26 28.2 22.6 C28.6 21.8 28 21.4 27.2 21.8 C22 24.2 12.4 22.6 13 13.4 Z" fill="#14418f" />
  </svg>
);

const Diamond = () => (
  <svg viewBox="0 0 30 30" className="size-[30px]">
    <defs>
      <linearGradient id="dia">
        <stop offset="0" stopColor="#f542e6" />
        <stop offset="0.45" stopColor="#f90d10" />
        <stop offset="0.6" stopColor="#f71405" />
        <stop offset="1" stopColor="#f9c00c" />
      </linearGradient>
    </defs>
    <path d="M15 0.5 L29.8 15 L15 29.5 L0.2 15 Z" fill="url(#dia)" />
  </svg>
);

const Explorer = () => (
  <svg viewBox="0 0 30 26" className="h-[26px] w-[30px]">
    <defs>
      <linearGradient id="fo" x1="0" y1="0" x2="0.4" y2="1">
        <stop offset="0" stopColor="#ffdf6c" />
        <stop offset="1" stopColor="#fcbc19" />
      </linearGradient>
    </defs>
    <path d="M0 1 Q0 0 1 0 H10 L12.5 3 V8 H0 Z" fill="#e0a00d" />
    <path d="M0 4.6 H10 L12 3 H29 Q30 3 30 4 V25 Q30 26 29 26 H1 Q0 26 0 25 Z" fill="url(#fo)" />
    <path d="M5 26 V21 Q5 19 7 19 H23 Q25 19 25 21 V26 Z" fill="#1379d3" />
    <path d="M9 22.6 H21" stroke="#0c4f94" strokeWidth="1.4" />
  </svg>
);

const Chrome = () => (
  <span className="relative flex size-[30px]">
    <svg viewBox="0 0 30 30" className="size-[30px]">
      <path d="M15 15 L2 7.5 A15 15 0 0 1 28 7.5 Z" fill="#e33b2e" />
      <path d="M2 7.5 A15 15 0 0 0 15 30 L21.5 18.7 L15 15 Z" fill="#259a44" />
      <path d="M28 7.5 A15 15 0 0 1 15 30 L21.5 18.7 L15 7.5 Z" fill="#fbc116" />
      <circle cx="15" cy="15" r="7.4" fill="#fff" />
      <circle cx="15" cy="15" r="5.8" fill="#2f7bea" />
    </svg>
    <span className="absolute -top-1.5 left-[15px] flex size-5 items-center justify-center rounded-full bg-[#512da8] pb-[2px] text-[11px] text-white">y</span>
  </span>
);

const VsCode = () => (
  <svg viewBox="0 0 30 30" className="size-[30px]">
    <path d="M22 0 L0.8 18.4 Q0 19.2 0.8 20 L2.6 21.6 Q3.4 22.2 4.2 21.6 L22 8.2 Z" fill="#1581c8" />
    <path d="M22 30 L0.8 11.4 Q0 10.6 0.8 9.8 L2.6 8.2 Q3.4 7.6 4.2 8.2 L22 21.8 Z" fill="#1488d2" />
    <path d="M21 0.4 Q22 -0.3 23 0.3 L29 3.2 Q30 3.8 30 4.8 V25.2 Q30 26.2 29 26.8 L23 29.8 Q22 30.2 21 29.6 Q22 29.4 22 28 V2 Q22 0.6 21 0.4 Z" fill="#25a3ee" />
  </svg>
);

const Compass = () => (
  <span className="flex size-7 items-center justify-center rounded-full bg-[#f6f6f6]">
    <SiMongodb className="size-[19px] text-[#116149]" />
  </span>
);

type App = { icon: ReactNode; state: "idle" | "open" | "active" };
const APPS: App[] = [
  { icon: <TaskView />, state: "idle" },
  { icon: <VisualStudio />, state: "idle" },
  { icon: <Copilot size="lg" />, state: "idle" },
  { icon: <Store />, state: "idle" },
  { icon: <Manipal />, state: "idle" },
  { icon: <Help />, state: "idle" },
  { icon: <Edge />, state: "open" },
  { icon: <Diamond />, state: "idle" },
  { icon: <Explorer />, state: "idle" },
  { icon: <Chrome />, state: "active" },
  { icon: <VsCode />, state: "open" },
  { icon: <Compass />, state: "open" },
];

const INDICATOR = { idle: "h-1 w-2", open: "h-1 w-2 rounded-full bg-[#9a9a9a]", active: "h-1 w-5 rounded-full bg-[#4cc2ff]" };

function Taskbar() {
  return (
    <footer className="flex h-[60px] border-t border-[#464646] bg-linear-to-r from-[#202020] from-20% via-[#2b2b2b] via-45% to-[#202020] to-80% text-white">
      <div className="flex w-[446px] shrink-0 items-center pb-[3px] pl-[25px]">
        <Haze />
        <div className="ml-[9px] text-[14px] leading-5">
          <div>35°C</div>
          <div className="tracking-[0.12px] text-[#bdbdbd]">Haze</div>
        </div>
      </div>
      <div className="flex shrink-0 items-center pb-px">
        <Start />
        <div className="ml-[17px] flex h-10 w-[275px] items-center rounded-full border border-[#585858] border-t-[#6a6a6a] bg-[#474747] pl-3.5">
          <svg viewBox="0 0 20 20" className="size-5">
            <circle cx="9" cy="8.6" r="7.2" stroke="#eee" strokeWidth="2" fill="none" />
            <path d="M14 13.8 L18.6 18.6" stroke="#eee" strokeWidth="2.4" />
          </svg>
          <span className="ml-[11px] text-[16px] text-[#d2d2d2]">Search</span>
        </div>
      </div>
      <div className="ml-[2px] flex shrink-0 pb-px">
        {APPS.map((a, i) => (
          <div key={i} className="flex w-[55px] items-center justify-center">
            <div
              className={
                a.state === "active"
                  ? "relative flex h-[50px] w-[50px] flex-col items-center justify-between rounded-md border border-[#444] bg-[#363636] pt-[9px]"
                  : "relative flex h-[50px] w-[50px] flex-col items-center justify-between pt-[10px]"
              }
            >
              {a.state === "active" && <span className="absolute top-0 right-0 h-[48px] w-1.5 rounded-r-md border-l border-[#4a4a4a] bg-[#303030]" />}
              <div className={a.state === "active" ? "flex h-[30px] items-center pr-[1px]" : "flex h-[30px] items-center"}>{a.icon}</div>
              <div className={INDICATOR[a.state]} />
            </div>
          </div>
        ))}
      </div>
      <div className="ml-auto flex items-center pr-6 pb-px">
        <div className="flex w-10 justify-center">
          <svg viewBox="0 0 14 9" className="h-[9px] w-[14px]">
            <path d="M1 8 L7 1.6 L13 8" stroke="#fff" strokeWidth="1.8" fill="none" />
          </svg>
        </div>
        <div className="w-10 text-center text-[17.5px] font-bold tracking-[0.5px]">69</div>
        <div className="relative flex w-10 justify-center">
          <svg viewBox="0 0 20 20" className="size-5">
            <path d="M1 9 A8.8 8.8 0 0 1 18.4 5.4 M19 0.5 V6 H13.6 M1 19.5 V14.5 H6 M1.6 15 C4 18.4 7.6 20 11 19.2" stroke="#fff" strokeWidth="1.3" fill="none" />
          </svg>
          <span className="absolute top-[10px] left-5 size-[10px] rounded-full bg-[#ff9a0a]" />
        </div>
        <div className="flex w-10 justify-center">
          <svg viewBox="0 0 20 15" className="h-[15px] w-5">
            <rect x="0.7" y="0.7" width="18.6" height="13.6" rx="1.8" stroke="#fff" strokeWidth="1.4" fill="none" />
            <path d="M4 4.4 H16.5" stroke="#fff" strokeWidth="1.5" strokeDasharray="1.6 1.9" />
            <path d="M5.6 7.4 H15" stroke="#fff" strokeWidth="1.5" strokeDasharray="1.6 1.9" />
            <path d="M5 10.8 H15" stroke="#fff" strokeWidth="1.4" />
          </svg>
        </div>
        <div className="w-14 text-center text-[14px] leading-5">
          <div>ENG</div>
          <div>IN</div>
        </div>
        <div className="ml-1 flex w-[30px] justify-center">
          <svg viewBox="0 0 20 15" className="h-[15px] w-5">
            <path d="M1 5.4 Q10 -3 19 5.4 M3.6 8.4 Q10 2.4 16.4 8.4 M6.2 11 Q10 7.4 13.8 11" stroke="#fff" strokeWidth="1.4" fill="none" />
            <circle cx="10" cy="13" r="1.8" fill="#fff" />
          </svg>
        </div>
        <div className="flex w-[30px] justify-center">
          <svg viewBox="0 0 20 17" className="h-[17px] w-5">
            <path d="M0.8 5.6 H3.8 L8 1.8 V15.2 L3.8 11.4 H0.8 Z" stroke="#fff" strokeWidth="1.4" fill="none" />
            <path d="M10.8 5.6 Q12.6 8.5 10.8 11.4 M13.4 3.4 Q16.6 8.5 13.4 13.6 M16 1 Q20.8 8.5 16 16" stroke="#fff" strokeWidth="1.4" fill="none" />
          </svg>
        </div>
        <div className="flex w-[30px] justify-center">
          <svg viewBox="0 0 20 14" className="h-[14px] w-5">
            <rect x="0.7" y="0.7" width="16" height="12.6" rx="3" stroke="#fff" strokeWidth="1.4" fill="none" />
            <rect x="2.8" y="2.8" width="8.6" height="8.4" rx="1.2" fill="#fff" />
            <path d="M17.6 4.6 Q20 5 20 7 Q20 9 17.6 9.4 Z" fill="#fff" />
          </svg>
        </div>
        <div className="w-[85px] pb-px text-right text-[14px] leading-5 tracking-[0.26px] whitespace-nowrap">
          <div>6:23 PM</div>
          <div>4/19/2025</div>
        </div>
      </div>
    </footer>
  );
}

export default function App() {
  return (
    <div className="h-[1080px] w-[1920px] overflow-hidden bg-black font-['Open_Sans','Noto_Sans',sans-serif]">
      <header className="bg-[#281c1e]">
        <TabStrip />
        <div className="h-[101px] rounded-t-[10px] border-b border-[#5a4d42] bg-[#46383a]">
          <Toolbar />
          <BookmarksBar />
        </div>
      </header>
      <TaskPage />
      <Taskbar />
    </div>
  );
}
